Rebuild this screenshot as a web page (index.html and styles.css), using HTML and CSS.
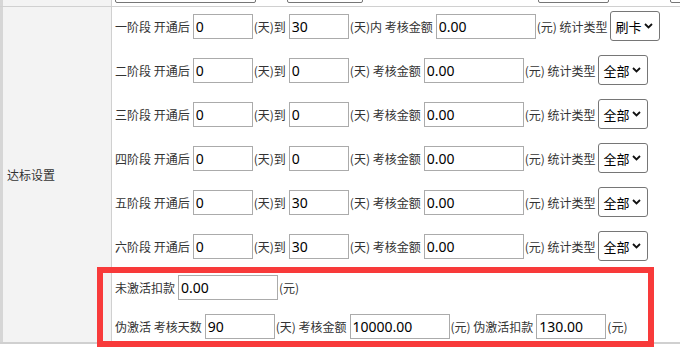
FILE: index.html
```html
<!DOCTYPE html>
<html lang="zh-CN">
<head>
    <meta charset="UTF-8">
    <meta name="viewport" content="width=device-width, initial-scale=1.0">
    <title>达标设置</title>
    <link rel="stylesheet" href="styles.css">
</head>
<body>
    <div class="form-table">
        <div class="row prev">
            <div class="head"></div>
            <div class="cell">
                <span class="box b1"></span>
                <span class="box b2"></span>
                <span class="box b3"></span>
                <span class="box b4"></span>
            </div>
        </div>

        <div class="row">
            <div class="head">达标设置</div>
            <div class="cell lines">
                <div class="line">
                    <span class="txt">一阶段 开通后</span><input class="w60" type="text" value="0">
                    <span class="txt">(天)到</span><input class="w60" type="text" value="30">
                    <span class="txt">(天)内 考核金额</span><input class="w100" type="text" value="0.00">
                    <span class="txt">(元) 统计类型</span>
                    <span class="sel">刷卡<svg width="9" height="6" viewBox="0 0 9 6"><path d="M1 1 L4.5 4.5 L8 1" fill="none" stroke="#111" stroke-width="1.8"/></svg></span>
                </div>
                <div class="line">
                    <span class="txt">二阶段 开通后</span><input class="w60" type="text" value="0">
                    <span class="txt">(天)到</span><input class="w60" type="text" value="0">
                    <span class="txt">(天) 考核金额</span><input class="w100" type="text" value="0.00">
                    <span class="txt">(元) 统计类型</span>
                    <span class="sel">全部<svg width="9" height="6" viewBox="0 0 9 6"><path d="M1 1 L4.5 4.5 L8 1" fill="none" stroke="#111" stroke-width="1.8"/></svg></span>
                </div>
                <div class="line">
                    <span class="txt">三阶段 开通后</span><input class="w60" type="text" value="0">
                    <span class="txt">(天)到</span><input class="w60" type="text" value="0">
                    <span class="txt">(天) 考核金额</span><input class="w100" type="text" value="0.00">
                    <span class="txt">(元) 统计类型</span>
                    <span class="sel">全部<svg width="9" height="6" viewBox="0 0 9 6"><path d="M1 1 L4.5 4.5 L8 1" fill="none" stroke="#111" stroke-width="1.8"/></svg></span>
                </div>
                <div class="line">
                    <span class="txt">四阶段 开通后</span><input class="w60" type="text" value="0">
                    <span class="txt">(天)到</span><input class="w60" type="text" value="0">
                    <span class="txt">(天) 考核金额</span><input class="w100" type="text" value="0.00">
                    <span class="txt">(元) 统计类型</span>
                    <span class="sel">全部<svg width="9" height="6" viewBox="0 0 9 6"><path d="M1 1 L4.5 4.5 L8 1" fill="none" stroke="#111" stroke-width="1.8"/></svg></span>
                </div>
                <div class="line">
                    <span class="txt">五阶段 开通后</span><input class="w60" type="text" value="0">
                    <span class="txt">(天)到</span><input class="w60" type="text" value="30">
                    <span class="txt">(天) 考核金额</span><input class="w100" type="text" value="0.00">
                    <span class="txt">(元) 统计类型</span>
                    <span class="sel">全部<svg width="9" height="6" viewBox="0 0 9 6"><path d="M1 1 L4.5 4.5 L8 1" fill="none" stroke="#111" stroke-width="1.8"/></svg></span>
                </div>
                <div class="line">
                    <span class="txt">六阶段 开通后</span><input class="w60" type="text" value="0">
                    <span class="txt">(天)到</span><input class="w60" type="text" value="30">
                    <span class="txt">(天) 考核金额</span><input class="w100" type="text" value="0.00">
                    <span class="txt">(元) 统计类型</span>
                    <span class="sel">全部<svg width="9" height="6" viewBox="0 0 9 6"><path d="M1 1 L4.5 4.5 L8 1" fill="none" stroke="#111" stroke-width="1.8"/></svg></span>
                </div>
                <div class="line">
                    <span class="txt">未激活扣款</span><input class="w100" type="text" value="0.00">
                    <span class="txt">(元)</span>
                </div>
                <div class="line">
                    <span class="txt">伪激活 考核天数</span><input class="w70" type="text" value="90">
                    <span class="txt">(天) 考核金额</span><input class="w100" type="text" value="10000.00">
                    <span class="txt">(元) 伪激活扣款</span><input class="w70" type="text" value="130.00">
                    <span class="txt">(元)</span>
                </div>
            </div>
        </div>

        <div class="row">
            <div class="head"></div>
            <div class="cell"></div>
        </div>

        <!-- 标注框 -->
        <div class="mark"></div>
    </div>
</body>
</html>
```

FILE: styles.css
```css
body {
    margin: 0;
    background-color: #fff;
    font-family: "Noto Sans CJK SC", sans-serif;
    font-size: 12px;
    color: #333;
}
.form-table {
    position: relative;
    height: 347px;
    overflow: hidden;
}
.row {
    display: grid;
    grid-template-columns: 112px 1fr;
    border-bottom: 1px solid #d0d0d0;
}
.head {
    background-color: #f3f3f3;
    border-left: 3px solid #d6d6d6;
    border-right: 1px solid #d0d0d0;
    padding-left: 4px;
    display: flex;
    align-items: center;
}
.cell {
    padding-left: 3px;
}
.prev .cell {
    height: 6px;
    box-sizing: border-box;
    padding-bottom: 3px;
    display: flex;
    align-items: flex-end;
    overflow: hidden;
}
.box {
    flex: none;
    height: 20px;
    border: 1px solid #767676;
    border-radius: 2px;
    box-sizing: border-box;
}
.b1 { width: 141px; }
.b2 { width: 76px; margin-left: 31px; }
.b3 { width: 71px; margin-left: 175px; }
.b4 { width: 40px; margin-left: 61px; }

.lines {
    display: flex;
    flex-direction: column;
    gap: 14px;
    padding-top: 4px;
    padding-bottom: 3px;
}
.line {
    display: flex;
    align-items: center;
    white-space: nowrap;
}
.txt {
    margin: 0 3px 0 1px;
}
.txt:first-child {
    margin-left: 0;
}
input {
    height: 25px;
    box-sizing: border-box;
    border: 1px solid #ababab;
    padding: 0 2px;
    margin: 0;
    font-family: "Noto Sans", "Noto Sans CJK SC", sans-serif;
    font-size: 14px;
    color: #000;
    outline: none;
}
.w60 { width: 60px; }
.w70 { width: 70px; }
.w100 { width: 100px; }
.sel {
    width: 50px;
    height: 30px;
    box-sizing: border-box;
    border: 1px solid #767676;
    border-radius: 3px;
    display: flex;
    align-items: center;
    padding: 0 6px 0 4px;
    font-size: 13px;
    color: #000;
}
.sel svg {
    margin-left: auto;
}
.mark {
    position: absolute;
    left: 97px;
    top: 267px;
    width: 557px;
    height: 80px;
    box-sizing: border-box;
    border: 6px solid #f83a3a;
    pointer-events: none;
}
```
